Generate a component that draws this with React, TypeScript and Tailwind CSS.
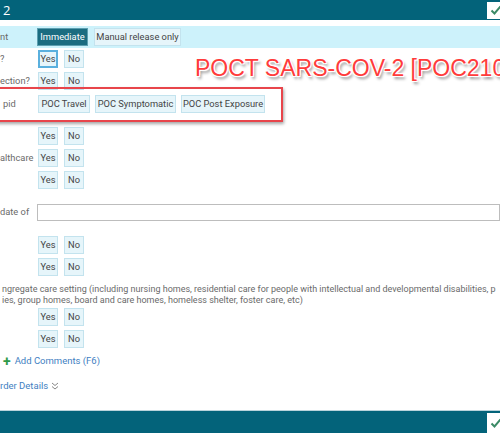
import React from "react";

const font = "font-['Roboto','Noto_Sans',sans-serif]";

function Btn({ children, w, selected = false, dark = false }: { children: React.ReactNode; w: string; selected?: boolean; dark?: boolean }) {
  if (dark) {
    return (
      <div className={"h-[18px] flex items-center justify-center whitespace-nowrap bg-[#1b6c80] border border-[#5d9fb0] text-white text-[9.3px] leading-none " + w}>
        {children}
      </div>
    );
  }
  return (
    <div
      className={
        "h-[18px] flex items-center justify-center whitespace-nowrap bg-[#e6f5fa] text-[#444] text-[9.3px] leading-none " +
        w +
        (selected ? " border-2 border-[#5ab0de]" : " border border-[#c3e3ee]")
      }
    >
      {children}
    </div>
  );
}

function YesNo({ selected = false }: { selected?: boolean }) {
  return (
    <div className="flex gap-[6px]">
      <Btn w="w-[20px]" selected={selected}>Yes</Btn>
      <Btn w="w-[20px]">No</Btn>
    </div>
  );
}

function Row({ label = "", pad = "pl-0", children }: { label?: string; pad?: string; children: React.ReactNode }) {
  return (
    <div className="h-[22px] flex items-center justify-start">
      <div className={"w-[38px] shrink-0 text-left whitespace-nowrap overflow-hidden text-[9.3px] text-[#6a6a6a] " + pad}>{label}</div>
      {children}
    </div>
  );
}

function Check({ h }: { h: string }) {
  return (
    <div className={"w-[13px] bg-white flex items-center justify-end overflow-hidden " + h}>
      <svg width="12" height="10" viewBox="0 0 12 10" className="mr-[-2px]">
        <path d="M1.5 5.5 L4.5 8.5 L10.5 1.5" fill="none" stroke="#3b8a66" strokeWidth="2" />
      </svg>
    </div>
  );
}

export default function App() {
  return (
    <div className={"relative w-[500px] h-[433px] overflow-hidden bg-white text-left " + font}>
      {/* header */}
      <div className="h-[20px] bg-[#03637a] flex items-center justify-between">
        <span className="pl-[3px] text-white text-[13px] leading-none font-['Open_Sans',sans-serif]">2</span>
        <Check h="h-[17px]" />
      </div>
      <div className="h-[6px]" />
      <div className="h-[22px] bg-[#cdf2fb] flex items-center justify-start">
        <div className="w-[37px] shrink-0 text-left pl-0 text-[9.3px] text-[#6a6a6a]">nt</div>
        <div className="flex gap-[6px]">
          <Btn w="w-[51px]" dark>Immediate</Btn>
          <Btn w="w-[87px]">Manual release only</Btn>
        </div>
      </div>
      <Row label="?">
        <YesNo selected />
      </Row>
      <Row label="ection?">
        <YesNo />
      </Row>
      <div className="h-[1px]" />
      <Row label="pid" pad="pl-[3px]">
        <div className="flex gap-[5px]">
          <Btn w="w-[52px]">POC Travel</Btn>
          <Btn w="w-[81px]">POC Symptomatic</Btn>
          <Btn w="w-[84px]">POC Post Exposure</Btn>
        </div>
      </Row>
      <div className="h-[10px]" />
      <Row>
        <YesNo />
      </Row>
      <Row label="althcare">
        <YesNo />
      </Row>
      <Row>
        <YesNo />
      </Row>
      <div className="h-[10px]" />
      <div className="h-[22px] flex items-center justify-start">
        <div className="w-[37px] shrink-0 text-left whitespace-nowrap text-[9.3px] text-[#6a6a6a]">date of</div>
        <div className="flex-1 h-[17px] border border-[#bdbdbd] bg-white" />
      </div>
      <div className="h-[11px]" />
      <Row>
        <YesNo />
      </Row>
      <Row>
        <YesNo />
      </Row>
      <div className="pt-[6px] text-[9px] leading-[11px] text-[#6a6a6a] whitespace-nowrap overflow-hidden pl-[2px]">
        <div>ngregate care setting (including nursing homes, residential care for people with intellectual and developmental disabilities, p</div>
        <div>ies, group homes, board and care homes, homeless shelter, foster care, etc)</div>
      </div>
      <Row>
        <YesNo />
      </Row>
      <Row>
        <YesNo />
      </Row>
      <div className="h-[22px] flex items-center pl-[3px] gap-[4px] text-[9.5px] text-[#3f80c2]">
        <span className="text-[#2f9a4a] text-[14px] font-bold leading-none">+</span>
        <span>Add Comments (F6)</span>
      </div>
      <div className="h-[28px] flex items-center gap-[3px] text-[9.5px] text-[#3f80c2] whitespace-nowrap">
        <span>rder Details</span>
        <svg width="8" height="8" viewBox="0 0 8 8">
          <path d="M1 1 L4 3.5 L7 1 M1 4.5 L4 7 L7 4.5" fill="none" stroke="#888" strokeWidth="1" />
        </svg>
      </div>
      {/* bottom */}
      <div className="absolute left-0 right-0 bottom-0 h-[23px] border-t border-[#b9d3db] bg-[#03637a] flex items-end justify-end">
        <Check h="h-[20px]" />
      </div>

      {/* annotation overlay */}
      <div className="absolute left-[-10px] top-[87px] w-[293px] h-[35px] border-2 border-[#e8454b] shadow-[1px_2px_3px_rgba(0,0,0,0.35)]" />
      <div className="absolute left-[195px] top-[51px] whitespace-nowrap font-['Liberation_Sans',Arial,sans-serif] text-[23px] text-[#ff3b3b] [text-shadow:0_0_1px_#fff,1px_1px_0_#fff,-1px_-1px_0_#fff,1px_-1px_0_#fff,-1px_1px_0_#fff,2px_3px_3px_rgba(0,0,0,0.45)]">
        POCT SARS-COV-2 [POC2101]
      </div>
    </div>
  );
}
